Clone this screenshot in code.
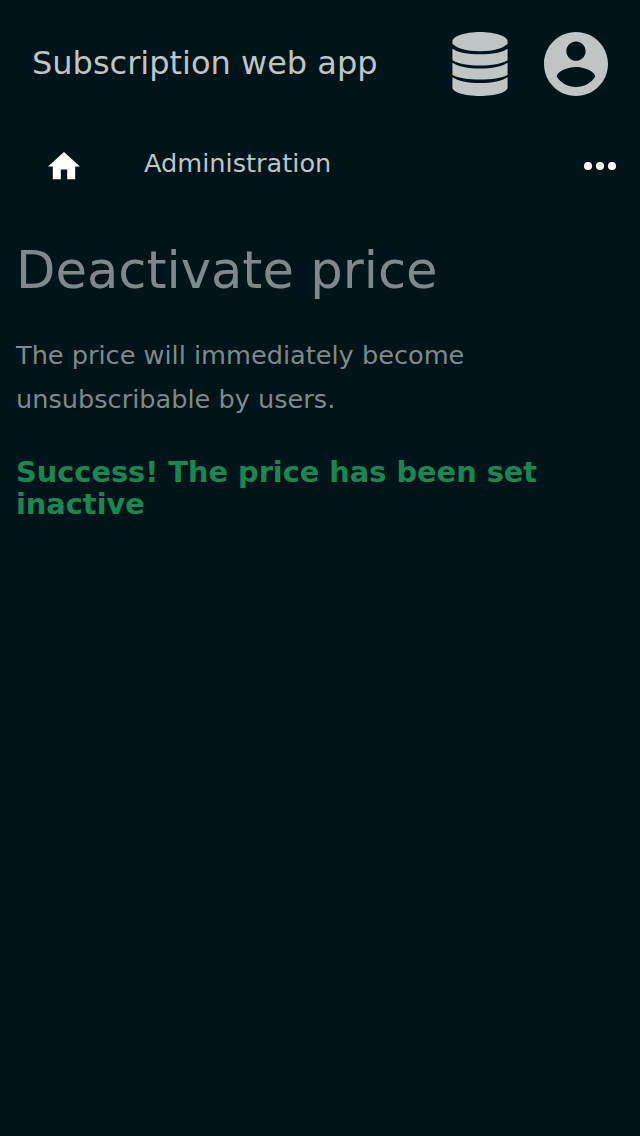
<header>
  <span class="brand">Subscription web app</span>
  <nav class="actions">
    <svg class="db" viewBox="0 0 56 64"><path d="M.4 9.500C.4 4.300 12.500 0 28 0s27.600 4.300 27.600 9.500v2c-3 4.500-14 7.700-27.600 7.700S3.400 16 .4 11.500z"/><path d="M.4 16.700C6 20.500 16 22.300 28 22.300s22-1.800 27.600-5.600v11.500C50 31.500 39.500 33.500 28 33.500S6 31.500.4 28.200z"/><path d="M.4 30.700C6 34.500 16 36.500 28 36.500s22-2 27.600-5.800v12C50 46.200 39.500 47.500 28 47.500S6 46.200.4 42.700z"/><path d="M.4 45.200C6 49 16 51 28 51s22-2 27.600-5.800v10.300C55.600 60.200 43.500 64 28 64S.4 60.200.4 55.500z"/></svg>
    <svg class="user" viewBox="2 2 20 20"><path d="M12 2C6.480 2 2 6.480 2 12s4.480 10 10 10 10-4.480 10-10S17.520 2 12 2zm0 3c1.660 0 3 1.340 3 3s-1.340 3-3 3-3-1.340-3-3 1.340-3 3-3zm0 14.200c-2.500 0-4.710-1.280-6-3.220.03-1.990 4-3.080 6-3.080 1.990 0 5.970 1.090 6 3.080-1.290 1.940-3.500 3.220-6 3.220z"/></svg>
  </nav>
</header>
<nav class="crumbs">
  <svg class="home" viewBox="2 3 20 17"><path d="M10 20v-6h4v6h5v-8h3L12 3 2 12h3v8z"/></svg>
  <span class="admin">Administration</span>
  <svg class="more" viewBox="0 0 32 8"><circle cx="4" cy="4" r="4"/><circle cx="16" cy="4" r="4"/><circle cx="28" cy="4" r="4"/></svg>
</nav>
<main>
  <h1>Deactivate price</h1>
  <p>The price will immediately become unsubscribable by users.</p>
  <h2>Success! The price has been set inactive</h2>
</main>

<style>
  :global(body) { background: #001419; font-family: "DejaVu Sans", sans-serif; }
  svg { display: block; flex: none; }
  header { display: flex; align-items: center; justify-content: space-between; height: 128px; padding: 0 32px; box-sizing: border-box; color: #bfc4c5; }
  .brand { font-size: 32px; line-height: 38px; padding-bottom: 2px; }
  .actions { display: flex; gap: 36px; fill: #bfc4c5; }
  .db { width: 56px; height: 64px; }
  .user { width: 64px; height: 64px; }
  .crumbs { display: flex; align-items: center; height: 76px; padding: 0 24px 0 48px; fill: #fff; }
  .home { width: 32px; height: 27.200px; }
  .admin { margin: 0 auto 0 64px; padding-bottom: 7px; font-size: 25.600px; line-height: 30px; color: #bfc4c5; }
  .more { width: 32px; height: 8px; }
  main { padding: 36px 16px 0; color: #7f898b; }
  h1 { margin: 0; font-size: 51.200px; line-height: 60px; font-weight: 400; }
  p { margin: 33px 0 0; font-size: 25.600px; line-height: 44px; }
  h2 { margin: 35px 0 0; font-size: 28.800px; line-height: 32px; color: #198754; }
</style>
